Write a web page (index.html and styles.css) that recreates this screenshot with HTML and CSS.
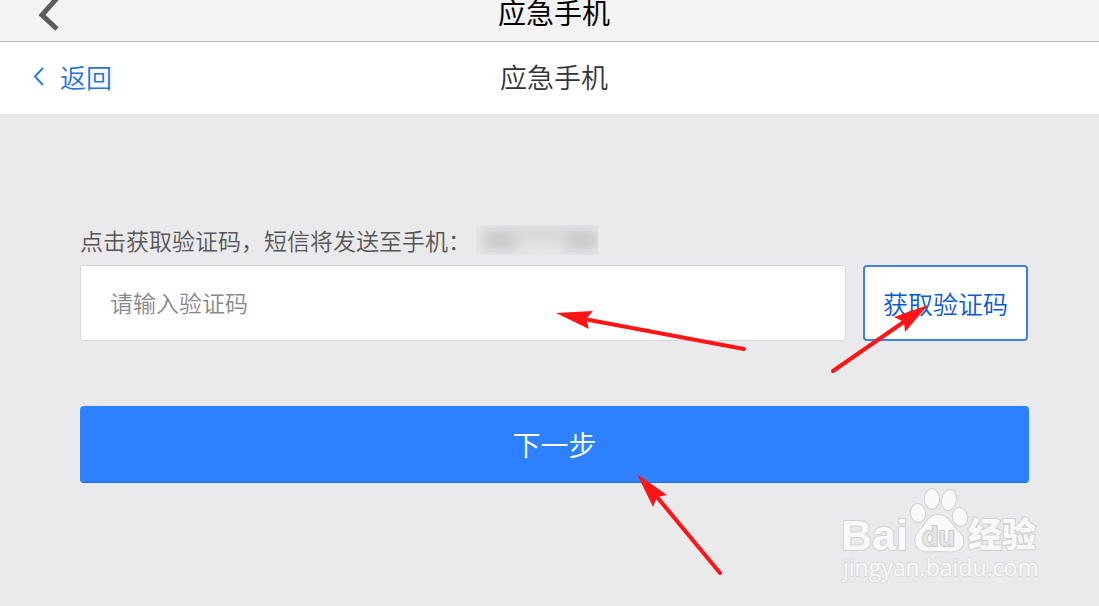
FILE: index.html
```html
<!DOCTYPE html>
<html lang="zh-CN">
<head>
<meta charset="utf-8">
<meta name="viewport" content="width=device-width, initial-scale=1">
<title>应急手机</title>
<link rel="stylesheet" href="styles.css">
</head>
<body>
<header class="topbar">
  <a class="topbar-back" href="#" aria-label="后退">
    <svg width="22" height="36" viewBox="0 0 22 36" fill="none" stroke="#5c5c5c" stroke-width="5"><path d="M20 -3L4 15L19 29"/></svg>
  </a>
  <h1 class="topbar-title">应急手机</h1>
</header>
<nav class="navbar">
  <a class="nav-back" href="#">
    <svg width="12" height="20" viewBox="0 0 12 20" fill="none" stroke="#2f7ce6" stroke-width="2"><path d="M10 1L2 9.500L10 18"/></svg>
    <span>返回</span>
  </a>
  <h2 class="nav-title">应急手机</h2>
</nav>
<main class="content">
  <form class="form">
    <label class="hint" for="code">点击获取验证码，短信将发送至手机：<span class="masked"><i class="smudge"></i><i class="smudge thin"></i><i class="smudge"></i></span></label>
    <div class="code-row">
      <div class="field">
        <input class="code-input" id="code" type="text" placeholder="请输入验证码">
        <svg class="arrow arrow-input" width="192" height="42" viewBox="0 0 192 42"><path d="M28 8L188 38" stroke="#ff1515" stroke-width="4" stroke-linecap="round"/><path d="M0 2L37 0L30 8L33 18Z" fill="#ff1515"/></svg>
      </div>
      <div class="field-action">
        <button class="get-code" type="button">获取验证码</button>
        <svg class="arrow arrow-code" width="100" height="70" viewBox="0 0 100 70"><path d="M3 66L78 14" stroke="#ff1515" stroke-width="4" stroke-linecap="round"/><path d="M98 0L64 12L74 17L75 27Z" fill="#ff1515"/></svg>
      </div>
    </div>
    <div class="submit-row">
      <button class="submit" type="submit">下一步</button>
      <svg class="arrow arrow-submit" width="88" height="104" viewBox="0 0 88 104"><path d="M20 23L83 99" stroke="#ff1515" stroke-width="4" stroke-linecap="round"/><path d="M0 0L30 21L20 23L16 33Z" fill="#ff1515"/></svg>
    </div>
  </form>
</main>
<svg class="watermark" width="204" height="100" viewBox="0 0 204 100" role="img" aria-label="Baidu 经验">
  <g class="paw">
    <ellipse cx="82" cy="27" rx="7" ry="9" transform="rotate(-8 82 27)"/>
    <ellipse cx="96" cy="13" rx="7" ry="10"/>
    <ellipse cx="113" cy="14" rx="7" ry="10" transform="rotate(12 113 14)"/>
    <ellipse cx="124" cy="31" rx="7" ry="9" transform="rotate(-12 124 31)"/>
    <path d="M102 29C93 29 91 36 86 42C81 47 78 51 80 58C82 66 90 66 103 65C117 66 125 66 127 58C129 51 124 47 119 42C114 36 111 29 102 29Z"/>
  </g>
  <text class="mark latin" x="5" y="64">Bai</text>
  <text class="mark du" x="86" y="60">du</text>
  <text class="mark cjk" x="132" y="61">经验</text>
  <text class="mark url" x="7" y="90">jingyan.baidu.com</text>
</svg>
</body>
</html>
```
FILE: styles.css
```css
* { box-sizing: border-box; }

body {
  position: relative;
  margin: 0;
  min-height: 100vh;
  overflow: hidden;
  background: #eaeaec;
  font-family: "Noto Sans CJK SC", sans-serif;
  font-weight: 350;
  color: #333;
}

h1, h2 { margin: 0; font-weight: 400; }
a { text-decoration: none; }
button, input { font-family: inherit; font-weight: inherit; }
svg { display: block; }

.topbar, .navbar {
  display: grid;
  grid-template-columns: 1fr auto 1fr;
  padding: 0 24px 0 33px;
}

.topbar {
  height: 42px;
  background: #f3f3f3;
  border-bottom: 1px solid #b4b4b4;
}
.topbar-back { padding-left: 5px; }
.topbar-title { font-size: 28px; line-height: 24px; color: #000; }

.navbar {
  height: 73px;
  padding-bottom: 2px;
  align-items: center;
  background: #fff;
  border-bottom: 1px solid #e6e6ea;
}
.nav-back {
  display: flex;
  align-items: center;
  gap: 15px;
  font-size: 26px;
  line-height: 36px;
  color: #2573df;
}
.nav-title { font-size: 27px; line-height: 36px; font-weight: 350; }

.content { padding: 109px 70px 0 80px; }
.form { display: flex; flex-direction: column; }

.hint {
  display: flex;
  align-items: center;
  height: 32px;
  margin-bottom: 9px;
  font-size: 23px;
  color: #555;
}
.masked {
  display: flex;
  align-items: center;
  justify-content: space-between;
  width: 122px;
  height: 30px;
  margin-left: 5px;
  padding: 0 0 0 8px;
  overflow: hidden;
  background: #e8e8ea;
}
.smudge { width: 32px; height: 14px; background: #b8b8b9; filter: blur(8px); }
.thin { flex: 1; height: 10px; margin-bottom: 12px; background: #ccccce; }

.code-row { display: flex; gap: 17px; padding-right: 1px; }
.field { position: relative; flex: 1; }
.field-action, .submit-row { position: relative; }

.code-input {
  display: block;
  width: 100%;
  height: 76px;
  padding: 0 29px 2px;
  border: 1px solid #d6d6da;
  border-radius: 3px;
  background: #fff;
  font-size: 23px;
  color: #333;
}
.code-input::placeholder { color: #888; opacity: 1; }

.get-code {
  display: block;
  width: 165px;
  height: 76px;
  padding: 0;
  border: 2px solid #3e82e2;
  border-radius: 4px;
  background: #fff;
  font-size: 25px;
  color: #075bd2;
}

.submit-row { margin-top: 65px; }
.submit {
  display: block;
  width: 100%;
  height: 77px;
  padding: 0;
  border: 0;
  border-bottom: 1px solid #1c70e5;
  border-radius: 4px;
  background: #2d81ff;
  font-size: 28px;
  color: #fff;
}

.arrow { position: absolute; z-index: 1; fill: none; pointer-events: none; }
.arrow-input { right: 98px; top: 46px; }
.arrow-code { left: -33px; top: 40px; }
.arrow-submit { left: 50%; margin-left: 82px; top: 68px; }

.watermark { position: absolute; right: 59px; bottom: 20px; overflow: visible; }
.paw, .mark {
  fill: #f9f9fa;
  stroke: #d0d0d2;
  stroke-width: 2px;
  paint-order: stroke;
  stroke-linejoin: round;
}
.latin { font: 700 43px "Liberation Sans", sans-serif; }
.du { font: 700 27px "Liberation Sans", sans-serif; fill: #e5e5e7; stroke: #c6c6c8; }
.cjk { font: 900 34px "Noto Sans CJK SC", sans-serif; }
.url { font: 500 23px "Open Sans", sans-serif; stroke: #dadadc; }
```
